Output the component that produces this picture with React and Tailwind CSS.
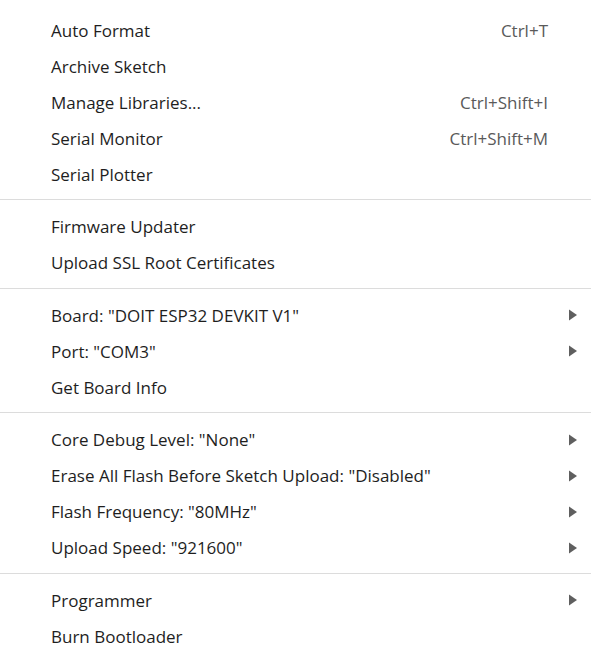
const groups = [
  [
    { label: "Auto Format", shortcut: "Ctrl+T" },
    { label: "Archive Sketch" },
    { label: "Manage Libraries...", shortcut: "Ctrl+Shift+I" },
    { label: "Serial Monitor", shortcut: "Ctrl+Shift+M" },
    { label: "Serial Plotter" },
  ],
  [
    { label: "Firmware Updater" },
    { label: "Upload SSL Root Certificates" },
  ],
  [
    { label: 'Board: "DOIT ESP32 DEVKIT V1"', sub: true },
    { label: 'Port: "COM3"', sub: true },
    { label: "Get Board Info" },
  ],
  [
    { label: 'Core Debug Level: "None"', sub: true },
    { label: 'Erase All Flash Before Sketch Upload: "Disabled"', sub: true },
    { label: 'Flash Frequency: "80MHz"', sub: true },
    { label: 'Upload Speed: "921600"', sub: true },
  ],
  [
    { label: "Programmer", sub: true },
    { label: "Burn Bootloader" },
  ],
];

function Arrow() {
  return (
    <svg width="10" height="12" viewBox="0 0 10 12" className="shrink-0">
      <path d="M1 0.5 L9 6 L1 11.5 Z" fill="#5f5f5f" />
    </svg>
  );
}

function Item({ item }) {
  return (
    <div className="flex items-center h-9 pb-[2px] pl-[51px] pr-[13px]">
      <span className="flex-1 text-[#1e1e1e]">{item.label}</span>
      {item.shortcut && <span className="text-[#5a5a5a] mr-[30px]">{item.shortcut}</span>}
      {item.sub && <Arrow />}
    </div>
  );
}

export default function App() {
  return (
    <div
      className="w-[591px] h-[651px] bg-white overflow-hidden pt-[13px] text-[17px] leading-none"
      style={{ fontFamily: '"Open Sans", "Noto Sans", sans-serif' }}
    >
      {groups.map((g, i) => (
        <div key={i}>
          {i > 0 && <div className="h-px bg-[#dcdcdc] mt-[6px] mb-[9.5px]" />}
          {g.map((item) => (
            <Item key={item.label} item={item} />
          ))}
        </div>
      ))}
    </div>
  );
}
